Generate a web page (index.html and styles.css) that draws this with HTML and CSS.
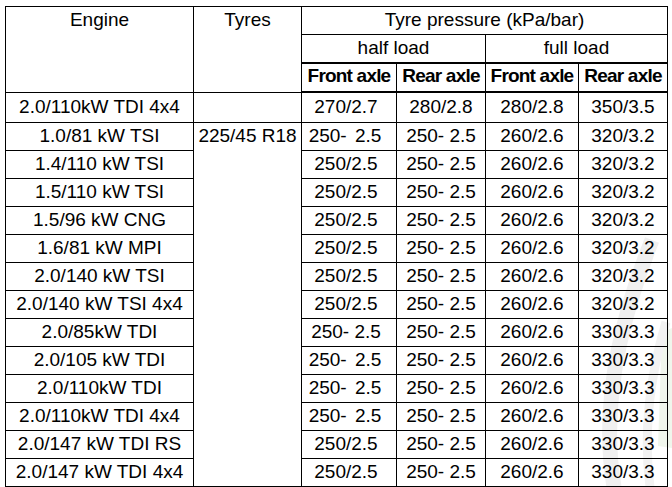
FILE: index.html
```html
<!DOCTYPE html>
<html>
<head>
<meta charset="utf-8">
<link rel="stylesheet" href="styles.css">
</head>
<body>
<svg class="watermark" width="672" height="487" viewBox="0 0 672 487" aria-hidden="true">
  <path d="M662 332 L672 328 L672 448 L658 446 Z" fill="#f0f6ec"/>
  <path d="M652 240 Q 596 380 614 487" fill="none" stroke="#f0f0f0" stroke-width="15"/>
  <path d="M666 322 Q 640 410 650 487" fill="none" stroke="#f2f2f2" stroke-width="9"/>
</svg>
<table class="tyres">
  <colgroup>
    <col class="c-engine"><col class="c-tyres"><col class="c-fa1"><col class="c-ra1"><col class="c-fa2"><col class="c-ra2">
  </colgroup>
  <thead>
    <tr class="h1">
      <th rowspan="3" class="top">Engine</th>
      <th rowspan="3" class="top">Tyres</th>
      <th colspan="4">Tyre pressure (kPa/bar)</th>
    </tr>
    <tr class="h2">
      <th colspan="2" class="thick">half load</th>
      <th colspan="2" class="thick">full load</th>
    </tr>
    <tr class="h3">
      <th class="b">Front axle</th><th class="b">Rear axle</th><th class="b">Front axle</th><th class="b">Rear axle</th>
    </tr>
  </thead>
  <tbody>
    <tr class="first"><td>2.0/110kW TDI 4x4</td><td></td><td class="fa1">270/2.7</td><td>280/2.8</td><td>280/2.8</td><td>350/3.5</td></tr>
    <tr><td>1.0/81 kW TSI</td><td rowspan="13" class="top">225/45 R18</td><td class="fa1 wide">250- 2.5</td><td>250- 2.5</td><td>260/2.6</td><td>320/3.2</td></tr>
    <tr><td>1.4/110 kW TSI</td><td class="fa1">250/2.5</td><td>250- 2.5</td><td>260/2.6</td><td>320/3.2</td></tr>
    <tr><td>1.5/110 kW TSI</td><td class="fa1">250/2.5</td><td>250- 2.5</td><td>260/2.6</td><td>320/3.2</td></tr>
    <tr><td>1.5/96 kW CNG</td><td class="fa1">250/2.5</td><td>250- 2.5</td><td>260/2.6</td><td>320/3.2</td></tr>
    <tr><td>1.6/81 kW MPI</td><td class="fa1">250/2.5</td><td>250- 2.5</td><td>260/2.6</td><td>320/3.2</td></tr>
    <tr><td>2.0/140 kW TSI</td><td class="fa1">250/2.5</td><td>250- 2.5</td><td>260/2.6</td><td>320/3.2</td></tr>
    <tr><td>2.0/140 kW TSI 4x4</td><td class="fa1">250/2.5</td><td>250- 2.5</td><td>260/2.6</td><td>320/3.2</td></tr>
    <tr><td>2.0/85kW TDI</td><td class="fa1">250- 2.5</td><td>250- 2.5</td><td>260/2.6</td><td>330/3.3</td></tr>
    <tr><td>2.0/105 kW TDI</td><td class="fa1 wide">250- 2.5</td><td>250- 2.5</td><td>260/2.6</td><td>330/3.3</td></tr>
    <tr><td>2.0/110kW TDI</td><td class="fa1 wide">250- 2.5</td><td>250- 2.5</td><td>260/2.6</td><td>330/3.3</td></tr>
    <tr><td>2.0/110kW TDI 4x4</td><td class="fa1 wide">250- 2.5</td><td>250- 2.5</td><td>260/2.6</td><td>330/3.3</td></tr>
    <tr><td>2.0/147 kW TDI RS</td><td class="fa1">250/2.5</td><td>250- 2.5</td><td>260/2.6</td><td>330/3.3</td></tr>
    <tr><td>2.0/147 kW TDI 4x4</td><td class="fa1">250/2.5</td><td>250- 2.5</td><td>260/2.6</td><td>330/3.3</td></tr>
  </tbody>
</table>
</body>
</html>
```

FILE: styles.css
```css
html, body {
  margin: 0;
  padding: 0;
  background: #ffffff;
}
body {
  position: relative;
  width: 672px;
  height: 487px;
  overflow: hidden;
  font-family: "Liberation Sans", Arial, sans-serif;
  color: #000000;
}
.watermark {
  position: absolute;
  left: 0;
  top: 0;
  z-index: 0;
}
.tyres {
  position: relative;
  z-index: 1;
  border-collapse: collapse;
  table-layout: fixed;
  width: 663px;
  margin: 6px 0 0 5px;
  font-size: 19px;
}
.c-engine { width: 188px; }
.c-tyres { width: 108px; }
.c-fa1 { width: 95px; }
.c-ra1 { width: 89px; }
.c-fa2 { width: 93px; }
.c-ra2 { width: 89px; }
.tyres th,
.tyres td {
  border: 1px solid #000000;
  padding: 0 0 1px 0;
  line-height: 26px;
  text-align: center;
  vertical-align: middle;
  white-space: nowrap;
  overflow: hidden;
}
.tyres th {
  font-weight: normal;
}
.tyres th.b {
  font-weight: bold;
  letter-spacing: -0.8px;
  line-height: 22px;
  padding-bottom: 4px;
}
.tyres .top {
  vertical-align: top;
}
.tyres .thick {
  border-bottom: 2px solid #000000;
}
.tyres .h3 th {
  border-bottom: 2px solid #000000;
}
.tyres tr { height: 28px; }
.tyres tr.h3 { height: 29px; }
.tyres tr.first { height: 30px; }
.tyres td.fa1 { padding-right: 6px; }
.tyres td.wide { word-spacing: 3px; padding-right: 8px; }
```
